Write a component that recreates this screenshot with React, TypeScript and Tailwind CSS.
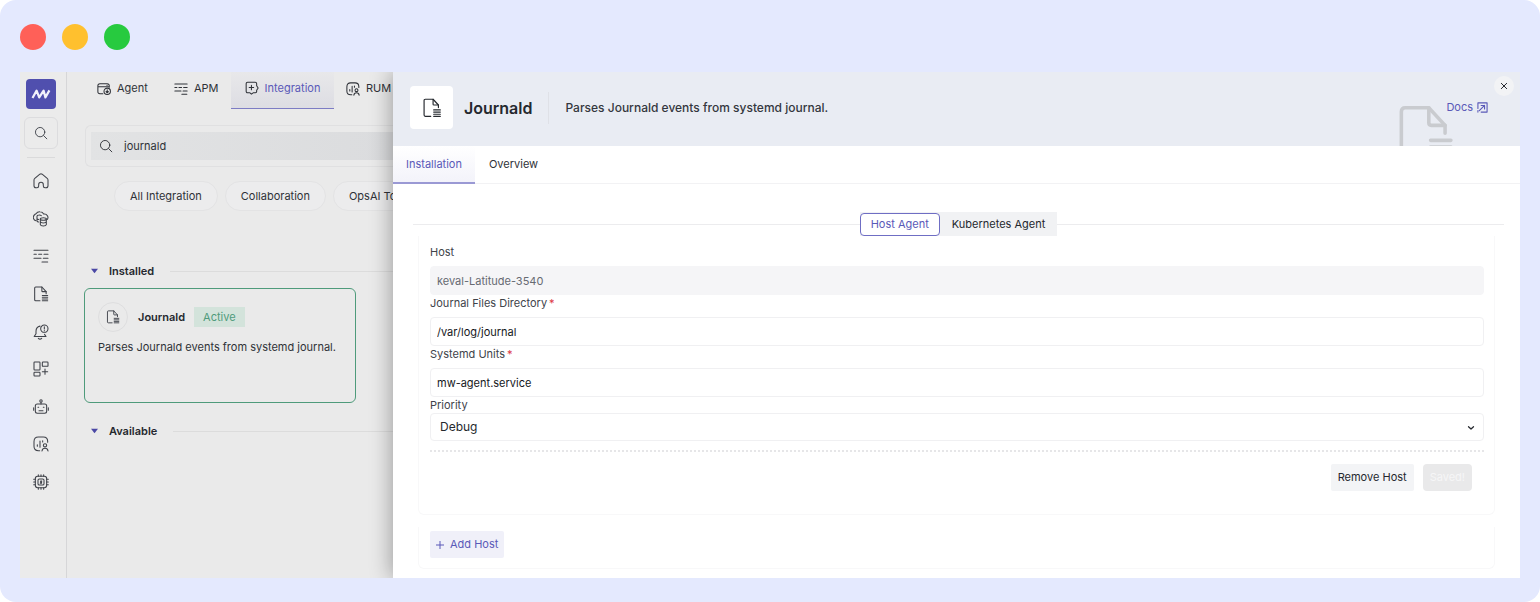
import type { ReactNode } from "react";

type IconProps = { className?: string; strokeWidth?: number; children?: ReactNode };

const Icon = ({ className = "size-4", strokeWidth = 1.6, children }: IconProps) => (
  <svg
    viewBox="0 0 24 24"
    className={className}
    fill="none"
    stroke="currentColor"
    strokeWidth={strokeWidth}
    strokeLinecap="round"
    strokeLinejoin="round"
    aria-hidden="true"
  >
    {children}
  </svg>
);

const LogoIcon = () => (
  <svg viewBox="0 0 30 30" className="size-[30px]" aria-hidden="true">
    <path
      d="M6.5 19L10.6 11.6L13.2 18.4L17.6 11.6L19.4 18.4L23.4 11.4"
      fill="none"
      stroke="#f1f0fb"
      strokeWidth="2.2"
      strokeLinejoin="round"
    />
  </svg>
);

const SearchIcon = (props: IconProps) => (
  <Icon {...props}>
    <circle cx="10.5" cy="10.5" r="8" />
    <path d="M16.5 16.5L22 22" />
  </Icon>
);

const HomeIcon = (props: IconProps) => (
  <Icon {...props}>
    <path d="M1.5 10.5Q1.5 9 2.7 8L10.3 1.8Q12 .6 13.7 1.8L21.3 8Q22.5 9 22.5 10.5V19Q22.5 22 19.5 22H18Q15.5 22 15.5 19.5V17.5Q15.5 14 12 14T8.5 17.5V19.5Q8.5 22 6 22H4.5Q1.5 22 1.5 19Z" />
  </Icon>
);

const CloudIcon = (props: IconProps) => (
  <Icon {...props}>
    <path d="M4.500 14.500A5 5 0 0 1 2 6Q3 4.500 4.500 4Q6.500 .8 10.500 1Q14.500 1 16 4.500Q20 4 21.500 7Q23.500 10 21.500 12.500" />
    <path d="M12.500 7Q11 5.800 9 6Q6 6.200 6 8V15Q6.500 16.500 8.500 16.500M6 11.500Q7 12.800 8.500 12.800" />
    <ellipse cx="15.500" cy="12" rx="4.500" ry="2" />
    <path d="M11 12V20.500Q11.500 22.500 15.500 22.500T20 20.500V12M11 16.200Q12 18 15.500 18T20 16.200" />
  </Icon>
);

const LinesIcon = (props: IconProps) => (
  <Icon {...props}>
    <path d="M1.500 3.500H22.500M1.500 9.500H5M8.500 9.500H13M16.500 9.500H22.500M1.500 15.500H12M15.500 15.500H22.500M13.500 21H22" />
  </Icon>
);

const FileIcon = (props: IconProps) => (
  <Icon {...props}>
    <path d="M10.500 22H4Q2.500 22 2.500 20.500V3Q2.500 1.500 4 1.500H13.300L19.700 8.400V11.500" />
    <path d="M13.300 1.500V7.400Q13.300 8.400 14.300 8.400H19.700M14 14.300H22M14 16.900H22M14 19.500H22M14 22H22" />
  </Icon>
);

const BellIcon = (props: IconProps) => (
  <Icon {...props}>
    <path d="M10.500 3.200Q4.500 4.500 4.500 11V14.500L1.800 18.700H19.500L17.300 15.500M8 21.500Q10.500 24 13 21.500" />
    <circle cx="17" cy="7" r="5.500" />
    <path d="M17 4.200V7.500M17 9.800V10" />
  </Icon>
);

const WidgetsIcon = (props: IconProps) => (
  <Icon {...props}>
    <rect x="1.500" y="1.500" width="9" height="12" rx="1" />
    <rect x="14" y="1.500" width="8.500" height="6.500" rx="1" />
    <rect x="1.500" y="17" width="9" height="5.500" rx="1" />
    <path d="M18 12V20M14 16H22" />
  </Icon>
);

const BotIcon = (props: IconProps) => (
  <Icon {...props}>
    <circle cx="12" cy="3" r="1.800" />
    <path d="M12 5V7.500M1 13V17M23 13V17M7.500 12.500H8.500M15.500 12.500H16.500M9 17.500H15" />
    <rect x="3.500" y="7.500" width="17" height="14" rx="3" />
  </Icon>
);

const RumIcon = (props: IconProps) => (
  <Icon {...props}>
    <path d="M10 22H8Q1.500 22 1.500 15.500V8.500Q1.500 1.500 8 1.500H15.500Q22 1.500 22 8V9.500M6.500 13V15.500M10.500 7.500V17M14.500 7V9" />
    <circle cx="18" cy="14" r="2.500" />
    <path d="M13.500 22.500Q14 18.500 18 18.500T22.500 22.500" />
  </Icon>
);

const ChipIcon = (props: IconProps) => (
  <Icon {...props}>
    <rect x="3.500" y="3.500" width="17" height="17" rx="3.500" />
    <rect x="7.500" y="7.500" width="9" height="9" rx="2" />
    <path d="M8 1V3.500M12 1V3.500M16 1V3.500M8 20.500V23M12 20.500V23M16 20.500V23M1 8H3.500M1 12H3.500M1 16H3.500M20.500 8H23M20.500 12H23M20.500 16H23M13.200 10.500H11.500V12H12.800V13.700H11" />
  </Icon>
);

const AgentIcon = (props: IconProps) => (
  <Icon {...props}>
    <path d="M10 20H5Q1.500 20 1.500 16.500V6.500Q1.500 3 5 3H17.500Q21 3 21 6.500V9M1.500 8H21M17 5.500H17.500" />
    <circle cx="17.500" cy="16" r="5.500" />
    <path d="M17.500 13.500V18.500M15.500 16.500L17.500 18.500L19.500 16.500" />
  </Icon>
);

const IntegrationIcon = (props: IconProps) => (
  <Icon {...props}>
    <path d="M4.500 2H17.500Q20 2 20 4.500V8L22.500 12L20 16V18Q20 20 18 20H14.500L11 22.500L8 20H4.500Q2 20 2 17.500V4.500Q2 2 4.500 2ZM11 7.500V15M7.200 11.200H14.800" />
  </Icon>
);

const ExternalIcon = (props: IconProps) => (
  <Icon {...props}>
    <path d="M2 14V2H22V22H9M2 18.500V22M5 19L16.500 7.500M9 7.500H16.500V15" />
  </Icon>
);

const navItems = [
  { label: "Home", icon: HomeIcon },
  { label: "Infrastructure", icon: CloudIcon },
  { label: "APM", icon: LinesIcon },
  { label: "Logs", icon: FileIcon },
  { label: "Alerts", icon: BellIcon },
  { label: "Dashboards", icon: WidgetsIcon },
  { label: "OpsAI", icon: BotIcon },
  { label: "RUM", icon: RumIcon },
  { label: "Synthetics", icon: ChipIcon },
];

const Sidebar = () => (
  <aside className="flex w-[47px] shrink-0 flex-col items-center border-r border-[#d6d6d8] bg-[#ebebeb] pt-[7px] pr-1 text-[#40434a]">
    <a href="#home" aria-label="Middleware" className="rounded-sm bg-[#504fae]">
      <LogoIcon />
    </a>
    <button
      aria-label="Search"
      className="mt-2 flex h-8 w-[34px] items-center justify-center rounded-md border border-[#dcdcde]"
    >
      <SearchIcon className="size-3.5" />
    </button>
    <div className="mt-2 w-7 border-t border-[#dadadb]" />
    <nav className="mt-[15px] flex h-[317px] flex-col justify-between">
      {navItems.map(({ label, icon: NavIcon }) => (
        <a key={label} href={`#${label}`} aria-label={label}>
          <NavIcon />
        </a>
      ))}
    </nav>
  </aside>
);

const TopTabs = () => (
  <nav className="flex h-[37px] w-max text-[11px] text-[#2f3238]">
    <a href="#agent" className="flex w-[77px] items-center gap-1.5 pb-1">
      <AgentIcon className="size-3.5" strokeWidth={1.8} />
      Agent
    </a>
    <a href="#apm" className="flex w-[57px] items-center gap-1.5 pb-1">
      <LinesIcon className="size-3.5" strokeWidth={1.8} />
      APM
    </a>
    <a
      href="#integration"
      className="flex w-[103px] items-center justify-center gap-1.5 border-b border-[#7d7cc4] bg-linear-to-b from-[#e8e8ea] to-[#dddde3] pb-1 text-[#5a59b8]"
    >
      <IntegrationIcon className="size-3.5 text-[#2f3238]" strokeWidth={1.8} />
      Integration
    </a>
    <a href="#rum" className="flex items-center gap-1.5 pb-1 pl-3">
      <RumIcon className="size-3.5" strokeWidth={1.8} />
      RUM
    </a>
  </nav>
);

const SectionTitle = ({ title }: { title: string }) => (
  <button className="flex w-full items-center text-left text-[11px] leading-4 font-semibold text-[#25282e]">
    <svg viewBox="0 0 8 6" className="mx-[7px] h-1.5 w-[7px]" aria-hidden="true">
      <path d="M0 .5H8L4 5.5Z" fill="#4b48a5" />
    </svg>
    <span className="ml-1">{title}</span>
    <span className="ml-4 flex-1 border-t border-[#dcdcdc]" />
  </button>
);

const IntegrationList = () => (
  <main className="min-w-0 flex-1 overflow-hidden bg-[#eaeaea] pl-[17px]">
    <div className="pl-[13px]">
      <TopTabs />
    </div>

    <div className="mt-4 ml-px rounded-l-md border border-r-0 border-[#e0e0e1] py-[6px] pl-[5px]">
      <label className="flex h-7 items-center gap-[11px] bg-linear-to-r from-[#e2e3e4] to-[#dbdcde] pl-2 text-[#2f3238]">
        <SearchIcon className="size-3.5 shrink-0" />
        <input
          aria-label="Search integrations"
          defaultValue="journald"
          className="min-w-0 flex-1 bg-transparent text-[11px] outline-none"
        />
      </label>
    </div>

    <div className="mt-3.5 ml-[30px] flex w-max gap-[7px] text-[11px] text-[#2f3238]">
      {["All Integration", "Collaboration", "OpsAI Tools"].map((chip) => (
        <button
          key={chip}
          className="h-[30px] rounded-full border border-[#e3e3e4] bg-[#ececed] px-[15px]"
        >
          {chip}
        </button>
      ))}
    </div>

    <section className="mt-[52px]">
      <SectionTitle title="Installed" />
      <article className="mt-[9px] mr-[37px] h-[115px] rounded-md border border-[#4f9b7b] p-[13px]">
        <div className="flex items-center">
          <span className="flex size-[30px] items-center justify-center rounded-full border border-[#dededf] text-[#40434a]">
            <FileIcon className="size-3.5" />
          </span>
          <h2 className="ml-2.5 text-[11px] font-semibold text-[#25282e]">Journald</h2>
          <span className="ml-[9px] bg-[#d3e3db] px-[9px] py-0.5 text-[11px] leading-4 text-[#4f9b7b]">
            Active
          </span>
        </div>
        <p className="mt-[7px] text-[11px] leading-4 whitespace-nowrap text-[#2f3238]">
          Parses Journald events from systemd journal.
        </p>
      </article>
    </section>

    <section className="mt-5">
      <SectionTitle title="Available" />
    </section>
  </main>
);

const DrawerHeader = () => (
  <header className="relative flex h-[74px] items-center overflow-hidden bg-[#e9ecf3] pr-8 pb-[3px] pl-[17px]">
    <span className="flex size-[43px] items-center justify-center rounded-sm bg-white text-[#25282e]">
      <FileIcon className="size-5" strokeWidth={1.4} />
    </span>
    <h1 className="ml-[11px] text-base font-semibold text-[#25282e]">Journald</h1>
    <div className="mx-4 h-8 border-l border-[#dfe1e7]" />
    <p className="text-[12px] font-medium text-[#34373e]">
      Parses Journald events from systemd journal.
    </p>
    <FileIcon
      className="absolute top-8 right-16 size-[61px] text-[#c9cbcf]"
      strokeWidth={1.4}
    />
    <a
      href="#docs"
      className="relative ml-auto flex items-center gap-1 text-[11px] text-[#5a59b8]"
    >
      Docs
      <ExternalIcon className="size-[11px]" strokeWidth={2.4} />
    </a>
    <button
      aria-label="Close"
      className="absolute top-1 right-1.5 flex size-5 items-center justify-center rounded-full bg-[#f2f3f5] text-[#25282e]"
    >
      <Icon className="size-2" strokeWidth={3}>
        <path d="M4 4L20 20M20 4L4 20" />
      </Icon>
    </button>
  </header>
);

const DrawerTabs = () => (
  <div role="tablist" className="flex h-[38px] border-b border-[#f2f2f4] text-[11px]">
    <button
      role="tab"
      aria-selected="true"
      className="h-[38px] border-b-2 border-[#9a99d4] bg-linear-to-b from-white to-[#f3f3fa] px-[13px] text-[#5a59b8]"
    >
      Installation
    </button>
    <button role="tab" aria-selected="false" className="px-3.5 text-[#2f3238]">
      Overview
    </button>
  </div>
);

type FieldProps = { id: string; label: string; value: string; required?: boolean; disabled?: boolean };

const Field = ({ id, label, value, required, disabled }: FieldProps) => (
  <div>
    <label htmlFor={id} className="block h-[22px] text-[11px] leading-4 text-[#40434a]">
      {label}
      {required && <span className="ml-0.5 text-[#dc3545]">*</span>}
    </label>
    <input
      id={id}
      defaultValue={value}
      disabled={disabled}
      className="block h-[29px] w-full rounded-sm border border-[#f0f0f2] px-1.5 text-[11px] text-[#15171b] disabled:border-[#f5f5f7] disabled:bg-[#f5f5f7] disabled:text-[#666a72]"
    />
  </div>
);

const HostForm = () => (
  <form className="rounded-b-md border border-t-0 border-[#f8f8f9] pt-2 pr-2.5 pb-[23px] pl-[11px]">
    <Field id="host" label="Host" value="keval-Latitude-3540" disabled />
    <Field id="directory" label="Journal Files Directory" value="/var/log/journal" required />
    <Field id="units" label="Systemd Units" value="mw-agent.service" required />
    <label htmlFor="priority" className="block text-[11px] leading-4 text-[#40434a]">
      Priority
    </label>
    <div className="relative">
      <select
        id="priority"
        defaultValue="Debug"
        className="block h-7 w-full appearance-none rounded-sm border border-[#f0f0f2] bg-white px-[9px] text-[12px] text-[#25282e]"
      >
        <option>Debug</option>
        <option>Info</option>
      </select>
      <Icon
        className="pointer-events-none absolute top-2.5 right-2 size-2.5 text-[#25282e]"
        strokeWidth={3}
      >
        <path d="M6 9L12 14.500L18 9" />
      </Icon>
    </div>
    <div className="mt-[9px] border-t-2 border-dotted border-[#e6e6e8]" />
    <div className="mt-3 flex justify-end gap-[9px] pr-3 text-[11px]">
      <button type="button" className="h-[27px] rounded-xs bg-[#f3f4f6] px-[7px] text-[#25282e]">
        Remove Host
      </button>
      <button
        type="submit"
        disabled
        className="h-[27px] rounded-sm bg-[#e9e9ea] px-[7px] text-[#f6f6f7]"
      >
        Saved!
      </button>
    </div>
  </form>
);

const Drawer = () => (
  <section className="relative min-w-0 flex-1 bg-white shadow-[-2px_0_20px_rgba(0,0,0,0.32)]">
    <DrawerHeader />
    <DrawerTabs />
    <div className="px-4 pt-7 pl-5">
      <div className="flex items-center text-[11px]">
        <div className="flex-1 border-t border-[#ececee]" />
        <div role="tablist" className="flex h-6 items-center bg-[#f1f2f4]">
          <button
            role="tab"
            aria-selected="true"
            className="h-[23px] rounded-sm border border-[#6f6ec4] bg-white px-2.5 text-[#5a59b8]"
          >
            Host Agent
          </button>
          <button role="tab" aria-selected="false" className="px-3 text-[#25282e]">
            Kubernetes Agent
          </button>
        </div>
        <div className="flex-1 border-t border-[#ececee]" />
      </div>
      <div className="pr-[9px] pl-[5px]">
        <HostForm />
        <div className="mt-3 rounded-b-md border border-t-0 border-[#f8f8f9] px-[11px] pt-1 pb-2.5">
          <button className="flex h-[27px] items-center gap-1.5 rounded-xs bg-[#f0f0f9] px-1.5 text-[11px] text-[#5a59b8]">
            <Icon className="size-2" strokeWidth={3}>
              <path d="M12 1V23M1 12H23" />
            </Icon>
            Add Host
          </button>
        </div>
      </div>
    </div>
  </section>
);

export default function App() {
  return (
    <div className="rounded-2xl bg-[#e4e9fe] px-5 pt-6 pb-6 font-['Inter',sans-serif]">
      <div className="flex gap-4">
        <span className="size-[26px] rounded-full bg-[#ff6058]" />
        <span className="size-[26px] rounded-full bg-[#ffc02e]" />
        <span className="size-[26px] rounded-full bg-[#27ca3f]" />
      </div>
      <div className="mt-[22px] flex min-h-[506px] overflow-hidden">
        <div className="flex w-[373px] shrink-0">
          <Sidebar />
          <IntegrationList />
        </div>
        <Drawer />
      </div>
    </div>
  );
}
